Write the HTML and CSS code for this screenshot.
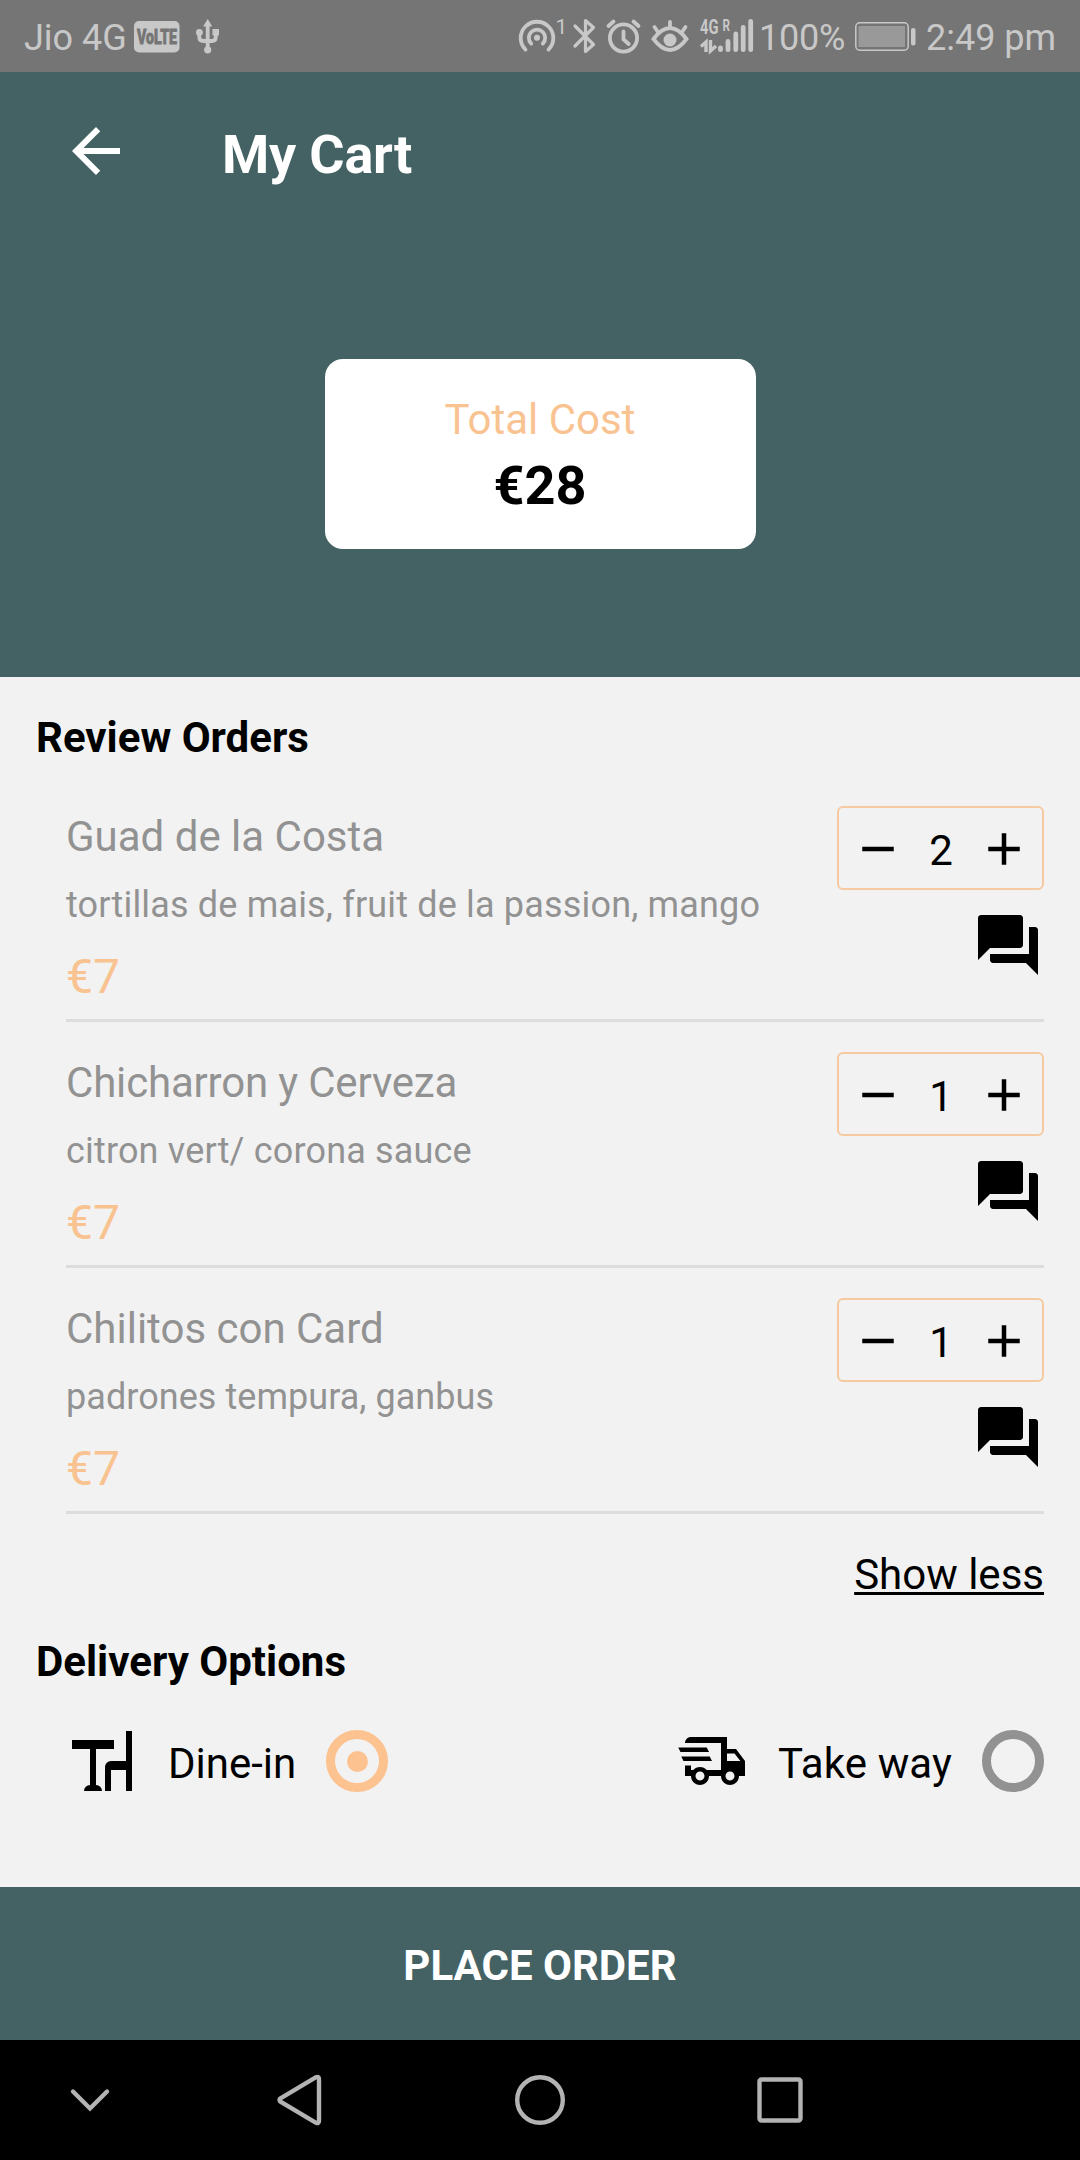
FILE: index.html
```html
<!DOCTYPE html>
<html lang="en">
<head>
<meta charset="utf-8">
<title>My Cart</title>
<link rel="stylesheet" href="styles.css">
</head>
<body>
<svg class="defs" width="0" height="0" aria-hidden="true">
  <symbol id="minus" viewBox="0 0 24 24"><path d="M19 13H5v-2h14v2z"/></symbol>
  <symbol id="plus" viewBox="0 0 24 24"><path d="M19 13h-6v6h-2v-6H5v-2h6V5h2v6h6v2z"/></symbol>
  <symbol id="forum" viewBox="0 0 24 24"><path d="M21 6h-2v9H6v2c0 .55.45 1 1 1h11l4 4V7c0-.55-.45-1-1-1zm-4 6V3c0-.55-.45-1-1-1H3c-.55 0-1 .45-1 1v14l4-4h10c.55 0 1-.45 1-1z"/></symbol>
</svg>
<div class="screen">
  <div class="status">
    <span class="carrier">Jio 4G</span>
    <svg class="volte" width="46" height="72" viewBox="134 0 46 72">
      <rect class="fill" x="134" y="21" width="45.500" height="31.500" rx="5"/>
      <text class="volte-text" x="137" y="43.500" textLength="40" lengthAdjust="spacingAndGlyphs">VoLTE</text>
    </svg>
    <svg class="usb" width="24" height="72" viewBox="196 0 24 72">
      <path class="line" d="M207.700 24V49M199.300 33v4q0 4 4 4h8.500q4 0 4-4v-4"/>
      <path class="fill" d="M207.700 19l4.600 7.500h-9.200zM212.500 29h6.500v6.500h-6.500z"/>
      <circle class="fill" cx="199.400" cy="32.500" r="3.400"/><circle class="fill" cx="207.700" cy="49.800" r="3.600"/>
    </svg>
    <span class="spacer"></span>
    <svg width="52" height="72" viewBox="516 0 52 72">
      <path class="line" d="M525.500 49.600a16.300 16.300 0 1 1 23 0M531.200 43.600a8.200 8.200 0 1 1 11.600 0"/>
      <circle class="fill" cx="537" cy="37.700" r="3"/>
      <text class="hotspot-count" x="555.500" y="34">1</text>
    </svg>
    <svg width="34" height="72" viewBox="568 0 34 72">
      <path class="line bt" d="M575 26l18.500 18.500-8 7V20.500l8 7L575 46"/>
    </svg>
    <svg width="44" height="72" viewBox="602 0 44 72">
      <circle class="line" cx="623.500" cy="38" r="13.600"/>
      <path class="line" d="M623.500 31.500v8l5.200 4.500M608.500 26l5-4.500M638.500 26l-5-4.500"/>
    </svg>
    <svg width="50" height="72" viewBox="646 0 50 72">
      <path class="line" d="M653.500 39q16.500-22 33 0-16.500 22-33 0zM670 22v6M654.500 27l3.500 5M685.500 27l-3.500 5"/>
      <circle class="fill" cx="670" cy="40" r="6.500"/>
    </svg>
    <svg width="64" height="72" viewBox="696 0 64 72">
      <text class="net" x="700" y="34" textLength="18.500" lengthAdjust="spacingAndGlyphs">4G</text>
      <text class="roam" x="722.500" y="31" textLength="7.500" lengthAdjust="spacingAndGlyphs">R</text>
      <path class="traffic" d="M706 52V42l-5 4.500M710.500 40v11l5.500-5"/>
      <path class="bars" d="M720.500 48v1.700M728 41.500v8.200M735.800 34v15.700M743.200 27.500v22.200M750.700 21.500v28.200"/>
    </svg>
    <span class="percent">100%</span>
    <svg class="battery" width="62" height="72" viewBox="855 0 62 72">
      <rect class="shell" x="855.800" y="22.800" width="52.400" height="27.400" rx="4"/>
      <rect class="charge" x="858.500" y="26" width="46.500" height="21"/>
      <rect class="fill" x="911" y="28" width="4.500" height="17.500" rx="2"/>
    </svg>
    <span class="clock">2:49 pm</span>
  </div>

  <header class="header">
    <div class="toolbar">
      <svg class="back" viewBox="0 0 24 24"><path d="M20 11H7.830l5.590-5.590L12 4l-8 8 8 8 1.410-1.410L7.830 13H20v-2z"/></svg>
      <h1 class="title">My Cart</h1>
    </div>
    <div class="total">
      <span class="total-label">Total Cost</span>
      <span class="total-value">€28</span>
    </div>
  </header>

  <main class="content">
    <h2 class="heading">Review Orders</h2>
    <ul class="orders">
      <li class="order">
        <div class="info">
          <span class="name">Guad de la Costa</span>
          <span class="desc">tortillas de mais, fruit de la passion, mango</span>
          <span class="price">€7</span>
        </div>
        <div class="actions">
          <div class="stepper"><svg class="sign"><use href="#minus"/></svg><span class="qty">2</span><svg class="sign"><use href="#plus"/></svg></div>
          <svg class="forum"><use href="#forum"/></svg>
        </div>
      </li>
      <li class="order">
        <div class="info">
          <span class="name tight">Chicharron y Cerveza</span>
          <span class="desc">citron vert/ corona sauce</span>
          <span class="price">€7</span>
        </div>
        <div class="actions">
          <div class="stepper"><svg class="sign"><use href="#minus"/></svg><span class="qty">1</span><svg class="sign"><use href="#plus"/></svg></div>
          <svg class="forum"><use href="#forum"/></svg>
        </div>
      </li>
      <li class="order">
        <div class="info">
          <span class="name">Chilitos con Card</span>
          <span class="desc snug">padrones tempura, ganbus</span>
          <span class="price">€7</span>
        </div>
        <div class="actions">
          <div class="stepper"><svg class="sign"><use href="#minus"/></svg><span class="qty">1</span><svg class="sign"><use href="#plus"/></svg></div>
          <svg class="forum"><use href="#forum"/></svg>
        </div>
      </li>
    </ul>
    <a class="toggle">Show less</a>
    <h2 class="heading delivery">Delivery Options</h2>
    <div class="options">
      <div class="option">
        <svg class="option-icon" viewBox="0 0 24 24"><path d="M12 22H6A2 2 0 0 1 8 20V8H2V5H16V8H10V20A2 2 0 0 1 12 22M22 2V22H20V15H15V22H13V14A2 2 0 0 1 15 12H20V2Z"/></svg>
        <span class="option-label">Dine-in</span>
        <span class="radio checked"></span>
      </div>
      <div class="option">
        <svg class="option-icon" viewBox="0 0 24 24"><path d="M.75 7.500H10.250L11 9H1.500L.75 7.500M1.750 10.500H11.250L12 12H2.500L1.750 10.500M18 18.500C18.830 18.500 19.500 17.830 19.500 17C19.500 16.170 18.830 15.500 18 15.500C17.170 15.500 16.500 16.170 16.500 17C16.500 17.830 17.170 18.500 18 18.500M19.500 9.500H17V12H21.460L19.500 9.500M8 18.500C8.830 18.500 9.500 17.830 9.500 17C9.500 16.170 8.830 15.500 8 15.500C7.170 15.500 6.500 16.170 6.500 17C6.500 17.830 7.170 18.500 8 18.500M20 8L23 12V17H21C21 18.660 19.660 20 18 20C16.340 20 15 18.660 15 17H11C11 18.660 9.650 20 8 20C6.340 20 5 18.660 5 17H3V13.500H5V15H5.760C6.310 14.390 7.110 14 8 14C8.890 14 9.690 14.390 10.240 15H15V6H3C3 4.890 3.890 4 5 4H17V8H20Z"/></svg>
        <span class="option-label away">Take way</span>
        <span class="radio"></span>
      </div>
    </div>
  </main>

  <button class="place" type="button">PLACE ORDER</button>

  <nav class="nav">
    <svg viewBox="0 0 60 60"><path d="M13 21.500L30 38.500 47 21.500"/></svg>
    <svg viewBox="0 0 60 60"><path d="M10.500 28.300L46 7.200Q49 6 49 9V51Q49 54 46 52.800L10.500 31.700Q8.500 30 10.500 28.300Z"/></svg>
    <svg viewBox="0 0 60 60"><circle cx="30" cy="30" r="22.800"/></svg>
    <svg viewBox="0 0 60 60"><rect x="9.500" y="9.500" width="41" height="41" rx="2"/></svg>
  </nav>
</div>
</body>
</html>
```
FILE: styles.css
```css
* {
  box-sizing: border-box;
}

body,
h1,
h2,
ul {
  margin: 0;
  padding: 0;
}

body {
  background: #f2f2f2;
  color: #000;
  font-family: Roboto, "Liberation Sans", sans-serif;
  font-size: 42px;
  line-height: 60px;
}

svg {
  display: block;
  flex: none;
}

.defs {
  position: absolute;
}

.screen {
  display: flex;
  flex-direction: column;
  width: 1080px;
  height: 2160px;
  overflow: hidden;
}

/* Status bar */
.status {
  display: flex;
  height: 72px;
  padding: 0 24px;
  background: #757575;
  color: #c8c8c8;
  font-size: 36px;
  line-height: 76px;
  white-space: nowrap;
}

.carrier {
  flex: 0 0 110px;
}

.usb {
  margin-left: 16px;
}

.spacer {
  flex: 1;
}

.percent {
  width: 87px;
  margin-left: -1px;
  letter-spacing: -0.2px;
}

.battery {
  margin-left: 9px;
}

.clock {
  width: 130px;
  margin-left: 9px;
}

.fill,
.hotspot-count,
.net,
.roam {
  fill: #c8c8c8;
}

.line,
.traffic,
.bars {
  fill: none;
  stroke: #c8c8c8;
  stroke-width: 3.8;
  stroke-linecap: round;
}

.bt {
  stroke-width: 3.2;
  stroke-linejoin: round;
}

.traffic {
  stroke-width: 3.4;
  stroke-linecap: butt;
}

.bars {
  stroke-width: 4.8;
}

.shell {
  fill: none;
  stroke: #c8c8c8;
  stroke-width: 1.5;
}

.charge {
  fill: #999;
}

.volte-text {
  fill: #757575;
  stroke: #757575;
  stroke-width: 0.8;
  font-size: 20px;
  font-weight: 900;
}

.hotspot-count {
  font-size: 21px;
}

.net {
  font-size: 20px;
  font-weight: 700;
}

.roam {
  font-size: 17px;
  font-weight: 700;
}

/* Header */
.header {
  display: flex;
  flex-direction: column;
  align-items: center;
  height: 605px;
  background: #446263;
}

.toolbar {
  display: flex;
  align-items: center;
  align-self: stretch;
  height: 158px;
  padding-left: 60px;
}

.back {
  width: 72px;
  height: 72px;
  fill: #fff;
}

.title {
  margin: 8px 0 0 90px;
  color: #fff;
  font-size: 54px;
  font-weight: 700;
  letter-spacing: -0.2px;
}

.total {
  display: flex;
  flex-direction: column;
  align-items: center;
  width: 431px;
  height: 190px;
  margin-top: 129px;
  padding-top: 31px;
  border-radius: 18px;
  background: #fff;
}

.total-label {
  color: #f9c391;
}

.total-value {
  margin-top: 6px;
  font-size: 54px;
  font-weight: 700;
}

/* Orders */
.content {
  display: flex;
  flex-direction: column;
  height: 1210px;
  padding: 31px 36px 0;
}

.heading {
  font-size: 42px;
  font-weight: 700;
}

.orders {
  margin: 8px 0 0 30px;
  list-style: none;
}

.order {
  display: flex;
  justify-content: space-between;
  height: 246px;
  padding-top: 30px;
  border-bottom: 3px solid #ddd;
}

.info {
  display: flex;
  flex-direction: column;
  color: #929292;
  white-space: nowrap;
}

.name {
  margin-top: 1px;
}

.tight {
  letter-spacing: -0.18px;
}

.desc {
  margin-top: 8px;
  font-size: 36px;
  letter-spacing: 0.17px;
}

.snug {
  letter-spacing: 0.05px;
}

.price {
  margin-top: 12px;
  color: #f9c391;
  font-size: 48px;
}

.actions {
  display: flex;
  flex-direction: column;
  align-items: flex-end;
  gap: 19px;
}

.stepper {
  display: flex;
  align-items: center;
  justify-content: space-between;
  width: 207px;
  height: 84px;
  padding: 0 11px 0 12px;
  border: 2px solid #f6c9a0;
  border-radius: 6px;
}

.sign {
  width: 54px;
  height: 54px;
  margin-top: 1px;
}

.qty {
  padding-top: 5px;
}

.forum {
  width: 72px;
  height: 72px;
}

.toggle {
  align-self: flex-end;
  margin-top: 31px;
  text-decoration: underline;
  text-decoration-thickness: 3px;
  text-underline-offset: 3px;
  text-decoration-skip-ink: none;
}

/* Delivery */
.delivery {
  margin-top: 27px;
}

.options {
  display: flex;
  justify-content: space-between;
  margin: 33px 0 0 30px;
}

.option {
  display: flex;
  align-items: center;
  height: 72px;
}

.option-icon {
  width: 72px;
  height: 72px;
}

.option-label {
  margin: 5px 30px 0;
}

.away {
  letter-spacing: 0.12px;
}

.radio {
  display: flex;
  align-items: center;
  justify-content: center;
  width: 62px;
  height: 62px;
  border: 9px solid #929292;
  border-radius: 50%;
}

.checked {
  border-color: #fcc290;
}

.checked::after {
  width: 21px;
  height: 21px;
  border-radius: 50%;
  background: #fcc290;
  content: "";
}

.place {
  height: 153px;
  padding: 4px 0 0;
  border: 0;
  background: #446263;
  color: #fff;
  font: 700 42px/60px Roboto, "Liberation Sans", sans-serif;
}

/* System navigation */
.nav {
  display: grid;
  grid-template-columns: 30px 60px 60px 60px;
  column-gap: 180px;
  height: 120px;
  padding: 30px 0 0 60px;
  background: #000;
}

.nav svg {
  width: 60px;
  height: 60px;
  fill: none;
  stroke: #b3b3b3;
  stroke-width: 4.4;
  stroke-linecap: round;
}
```
